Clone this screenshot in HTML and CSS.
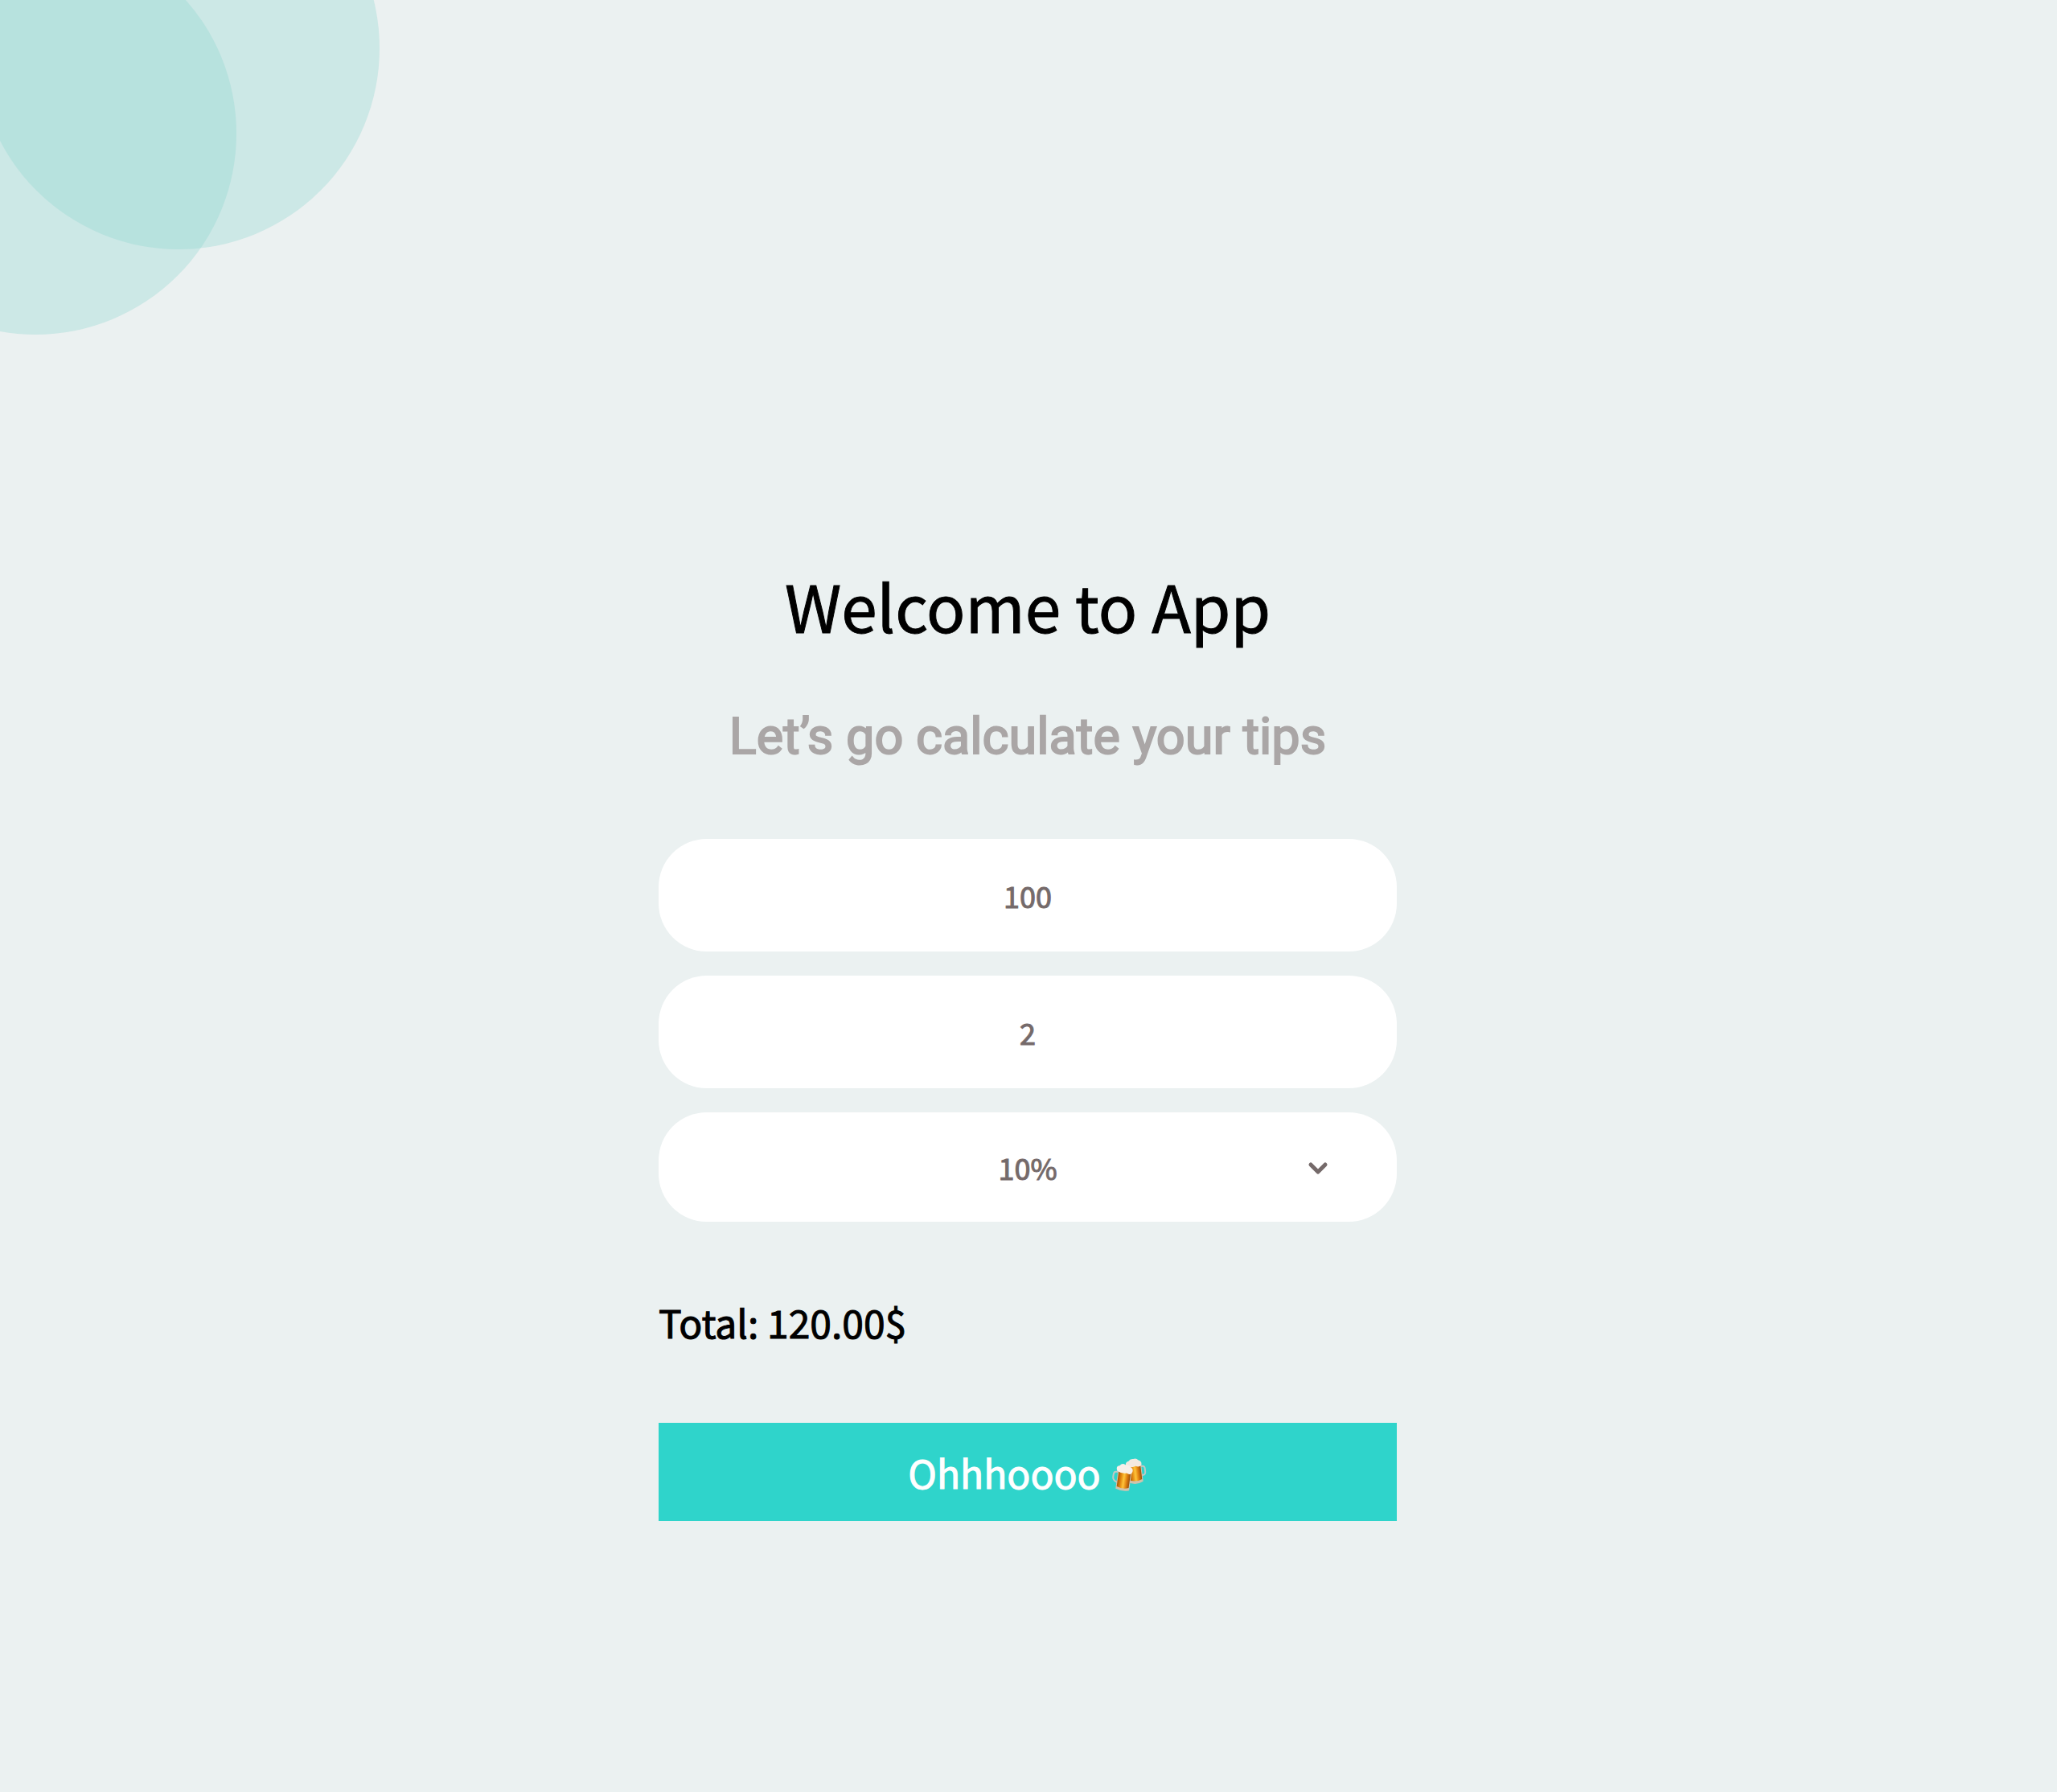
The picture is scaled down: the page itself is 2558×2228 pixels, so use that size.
FILE: index.html
```html
<!DOCTYPE html>
<html lang="en">
<head>
<meta charset="utf-8">
<meta name="viewport" content="width=device-width, initial-scale=1">
<title>Tip calculator</title>
<link rel="stylesheet" href="styles.css">
</head>
<body>
<div class="backdrop" aria-hidden="true">
  <span class="circle circle-left"></span>
  <span class="circle circle-top"></span>
</div>
<main class="page">
  <h1 class="title">Welcome to App</h1>
  <p class="subtitle">Let’s go calculate your tips</p>
  <form class="form">
    <input class="field" type="text" inputmode="decimal" value="100" aria-label="Bill amount">
    <input class="field" type="text" inputmode="numeric" value="2" aria-label="Number of people">
    <div class="select-wrap">
      <select class="field field-select" aria-label="Tip percentage">
        <option selected>10%</option>
        <option>15%</option>
        <option>20%</option>
      </select>
      <svg class="chevron" viewBox="0 0 28 18" aria-hidden="true"><path d="M5 4l9 9 9-9"/></svg>
    </div>
    <output class="total">Total: 120.00$</output>
    <button class="submit" type="button">
      <span>Ohhhoooo</span>
      <svg class="beers" viewBox="0 0 44 42" aria-hidden="true">
        <defs>
          <linearGradient id="beer" x1="0" x2="1" y1="0" y2="0">
            <stop offset="0" stop-color="#a8590a"/>
            <stop offset=".25" stop-color="#e08510"/>
            <stop offset=".5" stop-color="#ffc43a"/>
            <stop offset=".75" stop-color="#e07f10"/>
            <stop offset="1" stop-color="#9a4f0a"/>
          </linearGradient>
        </defs>
        <g transform="rotate(-7 28 16)">
          <path d="M36 11h2q3 0 3 3v4q0 4-3 4h-2" fill="none" stroke="#bfcac6" stroke-width="2"/>
          <path d="M20 8h17v22q-8 4-17 0z" fill="#cfc3ae"/>
          <path d="M21 9h15v18q-7 3-15 0z" fill="url(#beer)"/>
          <path d="M19 10q-3-6 3-7 2-3 6-2 4-1 6 2 5 2 3 7-3 2-7 0-5 2-11 0z" fill="#f4e9e1"/>
        </g>
        <g transform="rotate(8 14 26)">
          <path d="M6 18H4q-3 0-3 4v3q0 4 6 6" fill="none" stroke="#bfcac6" stroke-width="2"/>
          <path d="M6 15h17v24q-8 3-17 0z" fill="#cfc3ae"/>
          <path d="M7 16h15v20q-7 3-15 0z" fill="url(#beer)"/>
          <path d="M5 17q-3-6 2-7 3-4 7-2 5-1 7 2 5 2 2 8-3 2-6 0-6 2-12-1z" fill="#f9f0ea"/>
        </g>
      </svg>
    </button>
  </form>
</main>
</body>
</html>
```
FILE: styles.css
```css
* {
  box-sizing: border-box;
}

body {
  margin: 0;
  min-height: 100vh;
  background: #ebf1f1;
  color: #000;
  font-family: "Noto Sans CJK SC", "Noto Sans", sans-serif;
}

.backdrop {
  position: absolute;
  top: 0;
  left: 0;
  width: 500px;
  height: 440px;
  overflow: hidden;
}

.circle {
  position: absolute;
  width: 500px;
  height: 500px;
  border-radius: 50%;
  background: rgba(143, 215, 207, 0.34);
}

.circle-left {
  top: -84px;
  left: -206px;
}

.circle-top {
  top: -190px;
  left: -28px;
}

.page {
  position: relative;
  display: flex;
  flex-direction: column;
  align-items: center;
  padding: 692px 26px 80px 24px;
}

.title,
.field,
.total,
.submit {
  -webkit-text-stroke: 1px currentColor;
}

.title {
  margin: 0 0 64px;
  font-size: 80px;
  font-weight: 400;
  line-height: 120px;
  text-align: center;
}

.subtitle {
  margin: 0 0 87px;
  color: #aaa6a6;
  font-family: Roboto, sans-serif;
  font-size: 63px;
  font-weight: 400;
  line-height: 80px;
  text-align: center;
  -webkit-text-stroke: 2px currentColor;
}

.form {
  display: flex;
  flex-direction: column;
  gap: 30px;
  width: 100%;
  max-width: 918px;
}

.field {
  display: block;
  width: 100%;
  height: 140px;
  padding: 0 80px;
  border: 0;
  border-radius: 60px;
  background: #fff;
  color: #756a6a;
  font-family: inherit;
  font-size: 36px;
  text-align: center;
}

.select-wrap {
  position: relative;
}

.field-select {
  height: 136px;
  appearance: none;
  text-align-last: center;
}

.chevron {
  position: absolute;
  top: 61px;
  right: 84px;
  width: 28px;
  height: 18px;
  fill: none;
  stroke: #756a6a;
  stroke-width: 5;
  stroke-linecap: round;
  stroke-linejoin: round;
  pointer-events: none;
}

.total {
  margin: 58px 0 60px;
  font-size: 48px;
  line-height: 72px;
}

.submit {
  display: flex;
  align-items: center;
  justify-content: center;
  gap: 14px;
  height: 122px;
  padding: 0;
  border: 0;
  background: #2fd4cb;
  color: #fff;
  font-family: inherit;
  font-size: 48px;
  line-height: 72px;
}

.beers {
  width: 44px;
  height: 42px;
  margin-top: 8px;
}
```
